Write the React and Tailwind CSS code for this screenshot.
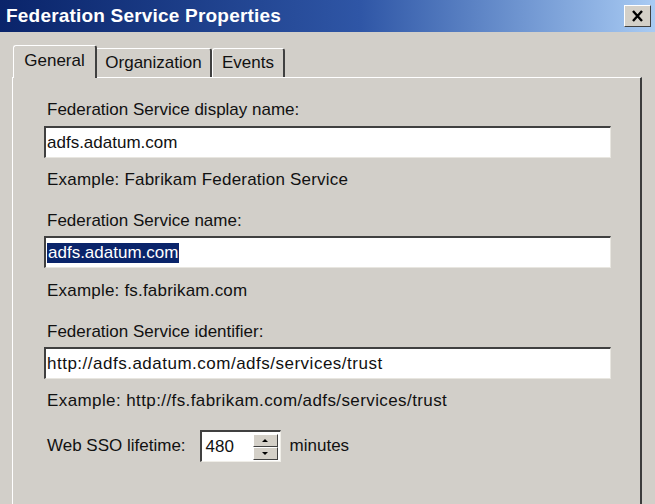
import React from 'react';

const Field = ({ value, selected, wide }) => (
  <div className="h-[32px] w-[567px] bg-white border-t-2 border-l-2 border-t-[#404040] border-l-[#404040] border-b border-r border-b-[#e8e6e0] border-r-[#e8e6e0] flex items-center pl-[1px]">
    {selected ? (
      <span className="bg-[#0a246a] text-white leading-[20px] px-[1px]">{value}</span>
    ) : (
      <span className={wide ? 'leading-[20px] tracking-[0.5px]' : 'leading-[20px]'}>{value}</span>
    )}
  </div>
);

const App = () => {
  return (
    <div className="w-[655px] h-[504px] overflow-hidden bg-[#d2cfc9] text-[17px] text-[#111] flex flex-col" style={{ fontFamily: '"Liberation Sans", Arial, sans-serif' }}>
      <div className="h-[32px] shrink-0 flex items-center justify-between pl-[6px] pr-[4px] bg-gradient-to-r from-[#0a246a] via-[#2f56a6] via-55% to-[#a9cbf3]">
        <span className="text-white font-bold text-[19px] tracking-[0.2px]">Federation Service Properties</span>
        <div className="w-[27px] h-[22px] bg-[#d4d0c8] border border-t-white border-l-white border-b-[#404040] border-r-[#404040] flex items-center justify-center">
          <svg width="13" height="12" viewBox="0 0 13 12">
            <path d="M2 1 L11 11 M11 1 L2 11" stroke="#000" strokeWidth="2.4" />
          </svg>
        </div>
      </div>

      <div className="flex items-end pl-[13px] mt-[13px] h-[32px] shrink-0">
        <div className="h-[33px] w-[84px] bg-[#d2cfc9] border-l border-t border-white border-r-2 border-r-[#404040] rounded-t-[3px] flex items-center justify-center relative z-10 -mb-[1px] pb-[3px]">
          General
        </div>
        <div className="h-[29px] w-[115px] border-t border-white border-r-2 border-r-[#404040] rounded-tr-[3px] flex items-center justify-center">
          Organization
        </div>
        <div className="h-[29px] w-[73px] border-t border-white border-l border-l-white border-r-2 border-r-[#404040] rounded-t-[3px] flex items-center justify-center">
          Events
        </div>
      </div>

      <div className="ml-[12px] w-[630px] flex-1 border-t border-l border-white border-r-2 border-r-[#3c3c3c] pl-[31px] pt-[22px]">
        <div className="leading-[20px] pl-[3px]">Federation Service display name:</div>
        <div className="mt-[6px]"><Field value="adfs.adatum.com" /></div>
        <div className="leading-[20px] pl-[3px] mt-[12px] tracking-[0.2px]">Example: Fabrikam Federation Service</div>

        <div className="leading-[20px] pl-[3px] mt-[21px]">Federation Service name:</div>
        <div className="mt-[5px]"><Field value="adfs.adatum.com" selected /></div>
        <div className="leading-[20px] pl-[3px] mt-[13px] tracking-[0.2px]">Example: fs.fabrikam.com</div>

        <div className="leading-[20px] pl-[3px] mt-[21px]">Federation Service identifier:</div>
        <div className="mt-[5px]"><Field value="http://adfs.adatum.com/adfs/services/trust" wide /></div>
        <div className="leading-[20px] pl-[3px] mt-[12px] tracking-[0.4px]">Example: http://fs.fabrikam.com/adfs/services/trust</div>

        <div className="flex items-center mt-[19px] pl-[3px]">
          <span className="leading-[20px]">Web SSO lifetime:</span>
          <div className="ml-[14px] h-[32px] w-[81px] bg-white border-t-2 border-l-2 border-t-[#404040] border-l-[#404040] border-b border-r border-b-[#f0eee8] border-r-[#f0eee8] flex items-center">
            <span className="pl-[4px] flex-1">480</span>
            <div className="w-[25px] h-[26px] mr-[2px] flex flex-col">
              <div className="flex-1 bg-[#d4d0c8] border border-t-white border-l-white border-b-[#404040] border-r-[#404040] flex items-center justify-center">
                <svg width="6" height="3" viewBox="0 0 6 3"><path d="M0 3 L3 0 L6 3 Z" fill="#000" /></svg>
              </div>
              <div className="flex-1 bg-[#d4d0c8] border border-t-white border-l-white border-b-[#404040] border-r-[#404040] flex items-center justify-center">
                <svg width="6" height="3" viewBox="0 0 6 3"><path d="M0 0 L6 0 L3 3 Z" fill="#000" /></svg>
              </div>
            </div>
          </div>
          <span className="ml-[9px] leading-[20px]">minutes</span>
        </div>
      </div>
    </div>
  );
};

export default App;
